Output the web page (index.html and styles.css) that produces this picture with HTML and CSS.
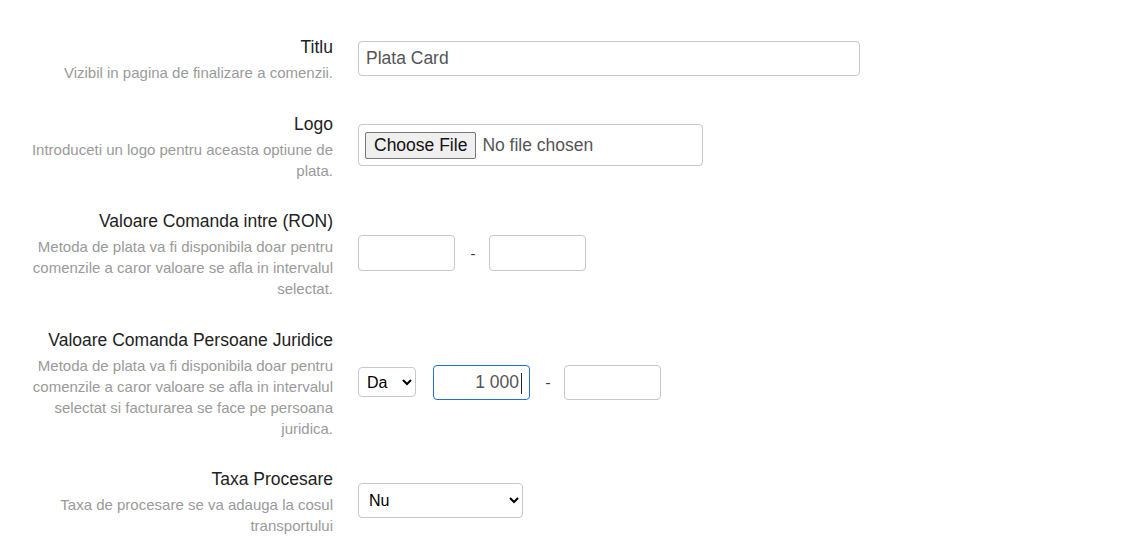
FILE: index.html
```html
<!DOCTYPE html>
<html lang="ro">
<head>
<meta charset="utf-8">
<title>Plata Card</title>
<link rel="stylesheet" href="styles.css">
</head>
<body>
<form class="settings">
  <div class="row">
    <div class="label-col">
      <label class="label">Titlu</label>
      <p class="desc">Vizibil in pagina de finalizare a comenzii.</p>
    </div>
    <div class="control-col">
      <input class="text-input wide" type="text" value="Plata Card">
    </div>
  </div>

  <div class="row">
    <div class="label-col">
      <label class="label">Logo</label>
      <p class="desc">Introduceti un logo pentru aceasta optiune de plata.</p>
    </div>
    <div class="control-col">
      <div class="file-box"><input class="file-input" type="file"></div>
    </div>
  </div>

  <div class="row">
    <div class="label-col">
      <label class="label">Valoare Comanda intre (RON)</label>
      <p class="desc">Metoda de plata va fi disponibila doar pentru comenzile a caror valoare se afla in intervalul selectat.</p>
    </div>
    <div class="control-col range">
      <input class="text-input small" type="text">
      <span class="dash">-</span>
      <input class="text-input small" type="text">
    </div>
  </div>

  <div class="row">
    <div class="label-col">
      <label class="label">Valoare Comanda Persoane Juridice</label>
      <p class="desc">Metoda de plata va fi disponibila doar pentru comenzile a caror valoare se afla in intervalul selectat si facturarea se face pe persoana juridica.</p>
    </div>
    <div class="control-col range">
      <select class="select short"><option>Da</option><option>Nu</option></select>
      <span class="caret-wrap"><input class="text-input small shorter focused" type="text" value="1 000"></span>
      <span class="dash">-</span>
      <input class="text-input small shorter" type="text">
    </div>
  </div>

  <div class="row">
    <div class="label-col">
      <label class="label">Taxa Procesare</label>
      <p class="desc">Taxa de procesare se va adauga la cosul transportului</p>
    </div>
    <div class="control-col">
      <select class="select long"><option>Nu</option><option>Da</option></select>
    </div>
  </div>
</form>
</body>
</html>
```

FILE: styles.css
```css
* { box-sizing: border-box; }

html, body {
  margin: 0;
  padding: 0;
  background: #ffffff;
}

body {
  font-family: "Liberation Sans", Arial, sans-serif;
  color: #333333;
}

.settings {
  display: flex;
  flex-direction: column;
  gap: 30.5px;
  padding-top: 37px;
}

.row {
  display: grid;
  grid-template-columns: 333px 1fr;
  column-gap: 25px;
  align-items: center;
}

.label-col {
  padding-left: 15px;
  text-align: right;
}

.label {
  display: block;
  font-size: 17.5px;
  line-height: 20px;
  color: #222222;
}

.desc {
  margin: 5px 0 0;
  font-size: 15px;
  line-height: 21px;
  color: #9a9a9a;
}

.control-col {
  display: flex;
  align-items: center;
  margin-top: -4px;
}

.text-input {
  font-family: "Liberation Sans", Arial, sans-serif;
  font-size: 17.5px;
  color: #555555;
  border: 1px solid #c8c8c8;
  border-radius: 4px;
  background: #ffffff;
  padding: 0 7px;
  outline: none;
}

.wide {
  width: 502px;
  height: 35px;
}

.small {
  width: 97px;
  height: 36px;
}

.shorter {
  height: 35px;
}

.focused {
  border-color: #1f6fd6;
  text-align: right;
  padding-right: 10px;
}

.caret-wrap {
  position: relative;
  display: inline-block;
  margin-left: 17px;
}

.caret-wrap::after {
  content: "";
  position: absolute;
  left: 88px;
  top: 8px;
  width: 1px;
  height: 21px;
  background: #222222;
}

.dash {
  font-size: 15px;
  color: #333333;
  width: 34px;
  text-align: center;
  padding-left: 2px;
}

.file-box {
  width: 345px;
  height: 42px;
  border: 1px solid #c8c8c8;
  border-radius: 4px;
  display: flex;
  align-items: center;
  padding: 0 6px;
}

.file-input {
  font-family: "Liberation Sans", Arial, sans-serif;
  font-size: 17.5px;
  color: #555555;
  width: 330px;
}

.file-input::file-selector-button {
  font-family: "Liberation Sans", Arial, sans-serif;
  font-size: 17.5px;
  color: #111111;
  background: #efefef;
  border: 1px solid #767676;
  border-radius: 2px;
  padding: 2px 8px;
  margin-right: 6px;
}

.select {
  font-family: "Liberation Sans", Arial, sans-serif;
  font-size: 16px;
  color: #000000;
  background: #ffffff;
  border: 1px solid #c8c8c8;
  border-radius: 4px;
  padding: 0 4px;
}

.short {
  width: 58px;
  height: 30px;
}

.long {
  width: 165px;
  height: 35px;
  padding-left: 6px;
}
```
